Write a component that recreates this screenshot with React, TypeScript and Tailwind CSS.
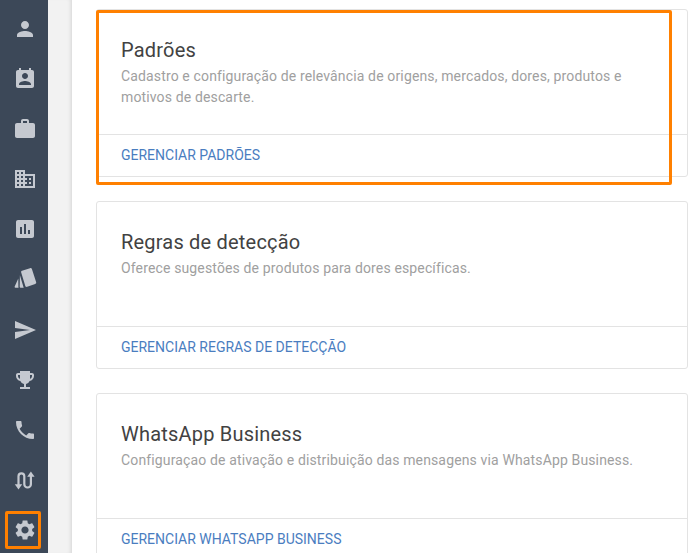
const P = {
  person: "M12 12c2.21 0 4-1.79 4-4s-1.79-4-4-4-4 1.79-4 4 1.79 4 4 4zm0 2c-2.67 0-8 1.34-8 4v2h16v-2c0-2.66-5.33-4-8-4z",
  cal: "M19 3h-1V1h-2v2H8V1H6v2H5c-1.11 0-2 .9-2 2v14c0 1.1.89 2 2 2h14c1.1 0 2-.9 2-2V5c0-1.1-.9-2-2-2zm-7 3c1.66 0 3 1.34 3 3s-1.34 3-3 3-3-1.34-3-3 1.34-3 3-3zm6 12H6v-1c0-2 4-3.1 6-3.1s6 1.1 6 3.1v1z",
  work: "M20 6h-4V4c0-1.11-.89-2-2-2h-4c-1.11 0-2 .89-2 2v2H4c-1.11 0-1.99.89-1.99 2L2 19c0 1.11.89 2 2 2h16c1.11 0 2-.89 2-2V8c0-1.11-.89-2-2-2zm-6 0h-4V4h4v2z",
  domain: "M12 7V3H2v18h20V7H12zM6 19H4v-2h2v2zm0-4H4v-2h2v2zm0-4H4V9h2v2zm0-4H4V5h2v2zm4 12H8v-2h2v2zm0-4H8v-2h2v2zm0-4H8V9h2v2zm0-4H8V5h2v2zm10 12h-8v-2h2v-2h-2v-2h2v-2h-2V9h8v10zm-2-8h-2v2h2v-2zm0 4h-2v2h2v-2z",
  chart: "M19 3H5c-1.1 0-2 .9-2 2v14c0 1.1.9 2 2 2h14c1.1 0 2-.9 2-2V5c0-1.1-.9-2-2-2zM9 17H7v-7h2v7zm4 0h-2V7h2v10zm4 0h-2v-4h2v4z",
  tags: "M9 3.8 17 1.2c1-.3 1.6 0 1.9.9l4.2 13c.3 1 0 1.6-.9 1.9l-8 2.8c-1 .3-1.6 0-1.9-.9L8.2 5.6c-.3-.9 0-1.5.8-1.8zM6.9 8.2l3.8 12.5H7.6c-.6 0-.9-.4-.9-1zM5.3 11.5l.1 8.3c0 .4.1.7.2.9H2.4c-.7 0-1-.5-.7-1.1z",
  send: "M2.01 21L23 12 2.01 3 2 10l15 2-15 2z",
  trophy: "M19 5h-2V3H7v2H5c-1.1 0-2 .9-2 2v1c0 2.55 1.92 4.63 4.39 4.94.63 1.5 1.98 2.63 3.61 2.96V19H7v2h10v-2h-4v-3.1c1.63-.33 2.98-1.46 3.61-2.96C19.08 12.63 21 10.55 21 8V7c0-1.1-.9-2-2-2zM5 8V7h2v3.82C5.84 10.4 5 9.3 5 8zm14 0c0 1.3-.84 2.4-2 2.82V7h2v1z",
  phone: "M6.62 10.79c1.44 2.83 3.76 5.14 6.59 6.59l2.2-2.2c.27-.27.67-.36 1.02-.24 1.12.37 2.33.57 3.57.57.55 0 1 .45 1 1V20c0 .55-.45 1-1 1-9.39 0-17-7.61-17-17 0-.55.45-1 1-1h3.5c.55 0 1 .45 1 1 0 1.25.2 2.45.57 3.57.11.35.03.74-.25 1.02l-2.2 2.2z",
  gear: "M19.14 12.94c.04-.3.06-.61.06-.94 0-.32-.02-.64-.07-.94l2.03-1.58c.18-.14.23-.41.12-.61l-1.92-3.32c-.12-.22-.37-.29-.59-.22l-2.39.96c-.5-.38-1.03-.7-1.62-.94l-.36-2.54c-.04-.24-.24-.41-.48-.41h-3.84c-.24 0-.43.17-.47.41l-.36 2.54c-.59.24-1.13.57-1.62.94l-2.39-.96c-.22-.08-.47 0-.59.22L2.74 8.87c-.12.21-.08.47.12.61l2.03 1.58c-.05.3-.09.63-.09.94s.02.64.07.94l-2.03 1.58c-.18.14-.23.41-.12.61l1.92 3.32c.12.22.37.29.59.22l2.39-.96c.5.38 1.03.7 1.62.94l.36 2.54c.05.24.24.41.48.41h3.84c.24 0 .44-.17.47-.41l.36-2.54c.59-.24 1.13-.56 1.62-.94l2.39.96c.22.08.47 0 .59-.22l1.92-3.32c.12-.22.07-.47-.12-.61l-2.01-1.58zM12 15.6c-1.98 0-3.6-1.62-3.6-3.6s1.62-3.6 3.6-3.6 3.6 1.62 3.6 3.6-1.62 3.6-3.6 3.6z",
};

function Route() {
  return (
    <svg viewBox="0 0 24 24" className="w-[24px] h-[24px]" fill="none" stroke="#c5c9d0" strokeWidth="2.2">
      <path d="M5.5 18V8.2a2.9 2.9 0 0 1 5.8 0v8a3.3 3.3 0 0 0 6.6 0V7" />
      <path d="M1.8 16.2 5.5 21.5l3.7-5.3z" fill="#c5c9d0" stroke="none" />
      <path d="M14.2 8.8 17.9 3.5l3.7 5.3z" fill="#c5c9d0" stroke="none" />
    </svg>
  );
}

const icons = ["person", "cal", "work", "domain", "chart", "tags", "send", "trophy", "phone", "route", "gear"] as const;

function Card({ title, text, link }: { title: string; text: string; link: string }) {
  return (
    <div className="h-[168px] shrink-0 flex flex-col border border-[#e3e3e3] rounded-[3px] bg-white">
      <div className="h-[125px] shrink-0 px-6 pt-[26px] border-b border-[#e3e3e3]">
        <h2 className="text-[20px] leading-[28px] font-normal text-[#424242] tracking-[0.2px]">{title}</h2>
        <p className="mt-[2px] text-[14px] leading-[21px] text-[#a0a0a0] tracking-[0.14px]">{text}</p>
      </div>
      <div className="flex-1 px-6 flex items-center text-[14px] text-[#4a7dbf]">{link}</div>
    </div>
  );
}

export default function App() {
  return (
    <div className="relative w-[699px] h-[553px] overflow-hidden flex bg-white" style={{ fontFamily: "Roboto, sans-serif" }}>
      <aside className="w-[48px] h-full shrink-0 bg-[#3c4858] flex flex-col items-center pt-[17px] gap-[26.1px] pl-[2px]">
        {icons.map((k) =>
          k === "route" ? (
            <Route key={k} />
          ) : (
            <svg key={k} viewBox="0 0 24 24" className="w-[24px] h-[24px]" fill="#c5c9d0">
              <path d={P[k]} />
            </svg>
          )
        )}
      </aside>
      <div className="w-[24px] shrink-0 bg-[#f2f2f2] shadow-[inset_-4px_0_4px_-3px_rgba(0,0,0,0.12)]" />
      <main className="flex-1 flex flex-col gap-[24px] pt-[9px] pl-[24px] pr-[11px] overflow-hidden">
        <Card
          title="Padrões"
          text="Cadastro e configuração de relevância de origens, mercados, dores, produtos e motivos de descarte."
          link="GERENCIAR PADRÕES"
        />
        <Card
          title="Regras de detecção"
          text="Oferece sugestões de produtos para dores específicas."
          link="GERENCIAR REGRAS DE DETECÇÃO"
        />
        <Card
          title="WhatsApp Business"
          text="Configuraçao de ativação e distribuição das mensagens via WhatsApp Business."
          link="GERENCIAR WHATSAPP BUSINESS"
        />
      </main>
      <div className="absolute left-[96px] top-[10px] w-[576px] h-[175px] border-[3px] border-[#ff8000] rounded-[2px]" />
      <div className="absolute left-[5px] top-[511px] w-[36px] h-[38px] border-[3px] border-[#ff8000] rounded-[2px]" />
    </div>
  );
}
